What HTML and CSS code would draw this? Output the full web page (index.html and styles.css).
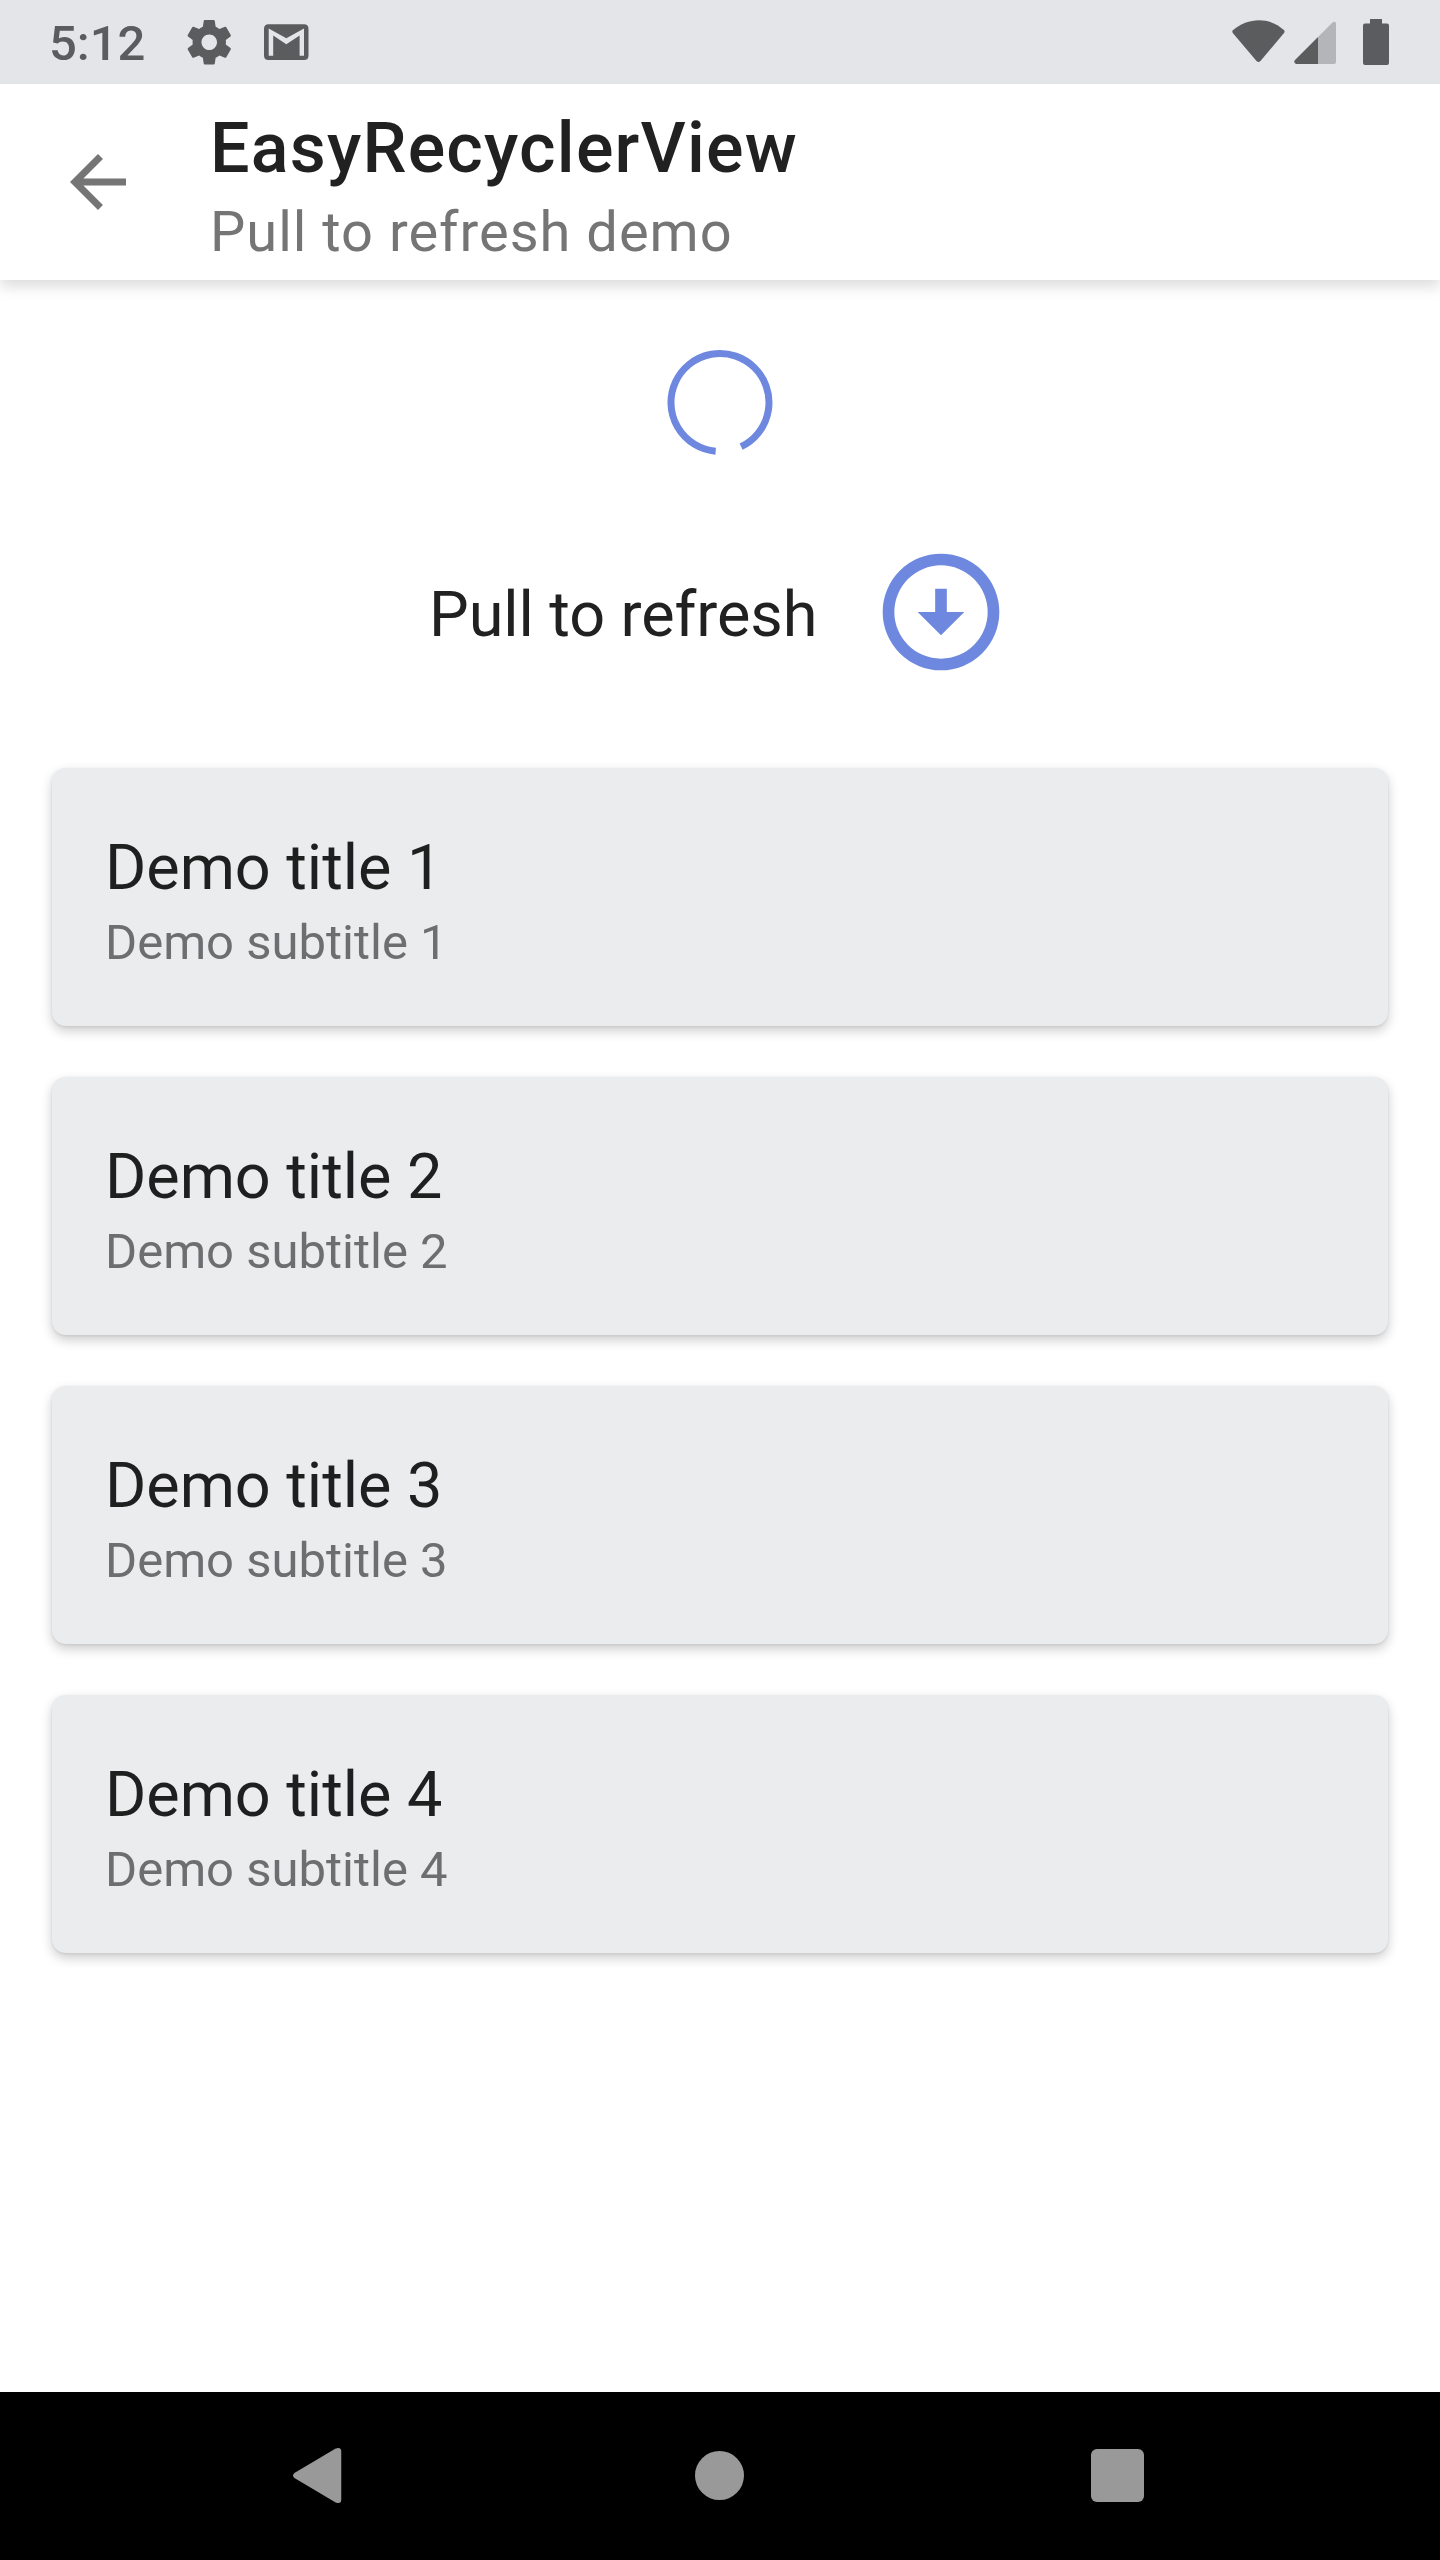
FILE: index.html
```html
<!DOCTYPE html>
<html lang="en">
<head>
<meta charset="utf-8">
<title>EasyRecyclerView</title>
<link rel="stylesheet" href="styles.css">
</head>
<body>
<div class="screen">
  <header class="status-bar">
    <span class="clock">5:12</span>
    <svg class="gear" viewBox="2 2 20 20"><path d="M19.43 12.98c.04-.32.07-.64.07-.98s-.03-.66-.07-.98l2.11-1.65c.19-.15.24-.42.12-.64l-2-3.46c-.12-.22-.39-.3-.61-.22l-2.49 1c-.52-.4-1.08-.73-1.69-.98l-.38-2.65C14.46 2.18 14.25 2 14 2h-4c-.25 0-.46.18-.49.42l-.38 2.65c-.61.25-1.17.59-1.69.98l-2.49-1c-.23-.09-.49 0-.61.22l-2 3.46c-.13.22-.07.49.12.64l2.11 1.65c-.04.32-.07.65-.07.98s.03.66.07.98l-2.11 1.65c-.19.15-.24.42-.12.64l2 3.46c.12.22.39.3.61.22l2.49-1c.52.4 1.08.73 1.69.98l.38 2.65c.03.24.24.42.49.42h4c.25 0 .46-.18.49-.42l.38-2.65c.61-.25 1.17-.59 1.69-.98l2.49 1c.23.09.49 0 .61-.22l2-3.46c.12-.22.07-.49-.12-.64l-2.11-1.65zM12 15.5c-1.93 0-3.5-1.57-3.5-3.5s1.57-3.5 3.5-3.5 3.5 1.57 3.5 3.5-1.57 3.5-3.5 3.5z"/></svg>
    <svg class="mail" viewBox="0 0 45 36"><path fill-rule="evenodd" d="M4.500 .3H40Q44.500 .3 44.500 4.800V31.500Q44.500 36 40 36H4.500Q0 36 0 31.500V4.800Q0 .3 4.500 .3ZM4.700 4.500V31.700H9.200V11.600L22.300 20.200L35.600 11.600V31.700H40V4.500L22.300 14.300Z"/></svg>
    <svg class="signals" viewBox="0 0 160 48"><path d="M.8 11.300C16-2.200 38-2.200 52.200 11.300Q53 12.500 52 14L28.500 42Q26.500 44 24.500 42L.8 14Q-.200 12.500 .8 11.300Z"/><path opacity=".35" d="M86 18L100 4Q104 1 104 5V43Q104 45 102 45H86Z"/><path d="M86 18V45H64Q61 43 63 41Z"/><path d="M138 0H150V4.500H155Q157 4.500 157 6.500V44Q157 46 155 46H133Q131 46 131 44V6.500Q131 4.500 133 4.500H138Z"/></svg>
  </header>
  <div class="toolbar">
    <svg class="back" viewBox="0 0 24 24"><path d="M20 11H7.830l5.590-5.590L12 4l-8 8 8 8 1.410-1.410L7.830 13H20z"/></svg>
    <div class="headings">
      <h1 class="title">EasyRecyclerView</h1>
      <p class="subtitle">Pull to refresh demo</p>
    </div>
  </div>
  <main class="content">
    <svg class="spinner" viewBox="0 0 106 106"><path d="M74.100 97.700A49 49 0 1 0 48.700 102.300"/></svg>
    <div class="pull">
      <span class="pull-text">Pull to refresh</span>
      <svg class="pull-icon" viewBox="0 0 24 24"><path fill-rule="evenodd" d="M12 4a8 8 0 1 1 0 16 8 8 0 0 1 0-16m0-2a10 10 0 1 0 0 20 10 10 0 0 0 0-20zM13 12V8h-2v4H8l4 4 4-4z"/></svg>
    </div>
    <section class="cards">
      <article class="card"><h2 class="card-title">Demo title 1</h2><p class="card-sub">Demo subtitle 1</p></article>
      <article class="card"><h2 class="card-title">Demo title 2</h2><p class="card-sub">Demo subtitle 2</p></article>
      <article class="card"><h2 class="card-title">Demo title 3</h2><p class="card-sub">Demo subtitle 3</p></article>
      <article class="card"><h2 class="card-title">Demo title 4</h2><p class="card-sub">Demo subtitle 4</p></article>
    </section>
  </main>
  <nav class="nav-bar">
    <svg class="nav-back" viewBox="0 0 50 58"><path d="M2 26.500L44 1.500Q49.700 -.5 49.700 4.500V53.500Q49.700 58.500 44 56.500L2 31.500Q-.7 29 2 26.500Z"/></svg>
    <span class="nav-home"></span>
    <span class="nav-recent"></span>
  </nav>
</div>
</body>
</html>
```
FILE: styles.css
```css
* { box-sizing: border-box; margin: 0; padding: 0; }
body { background: #fff; font-family: Roboto, sans-serif; color: #212121; }
h1, h2, p { font-weight: 400; white-space: nowrap; }
svg { display: block; flex: none; }
.screen { width: 1440px; height: 2560px; display: flex; flex-direction: column; overflow: hidden; }

.status-bar { height: 84px; background: #e4e5e9; color: #5b5c5e; fill: #5b5c5e; display: flex; align-items: flex-start; padding: 0 48px 0 49px; flex: none; }
.clock { font-size: 49px; font-weight: 500; line-height: 58px; margin-top: 15px; width: 138px; }
.gear { width: 44.5px; height: 44.5px; margin-top: 20px; }
.mail { width: 45px; height: 36px; margin: 24px 0 0 32.500px; }
.signals { width: 160px; height: 48px; margin: 19px 0 0 auto; }

.toolbar { height: 196px; flex: none; background: #fff; display: flex; align-items: flex-start; padding: 0 56px; box-shadow: 0 6px 14px rgba(0,0,0,.15); clip-path: inset(0 0 -40px 0); }
.back { width: 84px; height: 84px; margin-top: 56px; fill: #757575; }
.headings { margin: 22px 0 0 70px; }
.title { font-size: 70px; font-weight: 500; line-height: 84px; letter-spacing: 1.2px; }
.subtitle { font-size: 56px; line-height: 66px; margin-top: 9px; color: #757575; letter-spacing: 1px; }

.content { flex: 1; display: flex; flex-direction: column; align-items: center; }
.spinner { width: 106px; height: 106px; margin-top: 69px; fill: none; stroke: #6e88e0; stroke-width: 7; }
.pull { display: flex; align-items: center; gap: 55px; width: 1440px; height: 140px; margin-top: 87px; padding-left: 429px; }
.pull-text { font-size: 63px; line-height: 74px; white-space: nowrap; width: 387px; padding-top: 5px; letter-spacing: -.1px; }
.pull-icon { width: 140px; height: 140px; fill: #6e88e0; }
.cards { width: 1336px; display: flex; flex-direction: column; gap: 51px; margin-top: 86px; }
.card { height: 258px; border-radius: 14px; background: #ebecee; padding: 63px 53px 0; box-shadow: 0 5px 12px rgba(0,0,0,.2), 0 1px 3px rgba(0,0,0,.08); }
.card-title { font-size: 63px; line-height: 74px; color: #1e1f1f; letter-spacing: -.05px; }
.card-sub { font-size: 49px; line-height: 58px; margin-top: 9px; color: #6d6e70; }

.nav-bar { height: 168px; flex: none; background: #000; display: flex; align-items: center; padding: 0 0 1px 292px; fill: #999; }
.nav-back { width: 50px; height: 57px; }
.nav-home { width: 49px; height: 49px; border-radius: 50%; background: #999; margin-left: 353px; }
.nav-recent { width: 53px; height: 53px; border-radius: 6px; background: #999; margin-left: 347px; }
```
